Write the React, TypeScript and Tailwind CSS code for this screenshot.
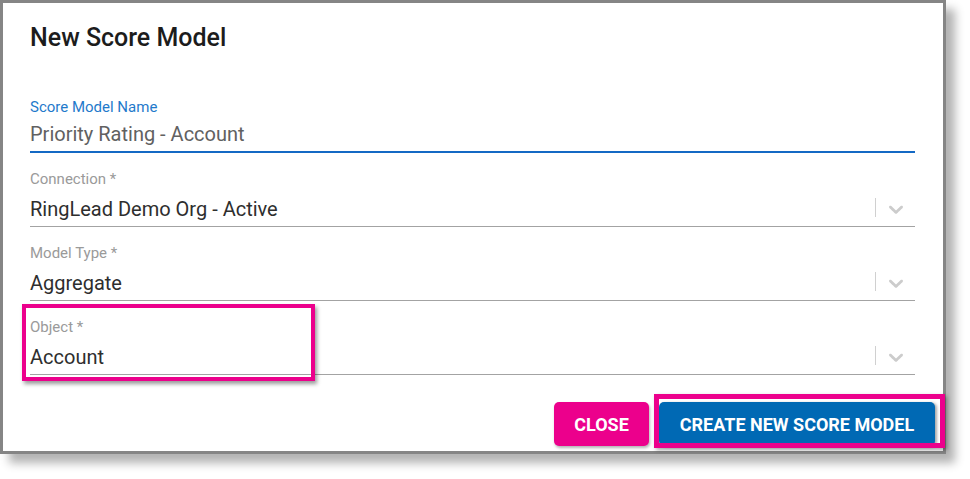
import React from 'react';

interface Field {
  label: string;
  value: string;
  select?: boolean;
}

const fields: Field[] = [
  { label: 'Connection *', value: 'RingLead Demo Org - Active', select: true },
  { label: 'Model Type *', value: 'Aggregate', select: true },
  { label: 'Object *', value: 'Account', select: true },
];

function Chevron() {
  return (
    <svg width="24" height="24" viewBox="0 0 20 20" className="ml-[8px] mr-[7px] fill-[#cccccc]">
      <path d="M4.516 7.548c0.436-0.446 1.043-0.481 1.576 0l3.908 3.747 3.908-3.747c0.533-0.481 1.141-0.446 1.574 0 0.436 0.445 0.408 1.197 0 1.615-0.406 0.418-4.695 4.502-4.695 4.502-0.217 0.223-0.502 0.335-0.787 0.335s-0.57-0.112-0.789-0.335c0 0-4.287-4.084-4.695-4.502s-0.436-1.17 0-1.615z" />
    </svg>
  );
}

function SelectField({ label, value }: Field) {
  return (
    <div className="pt-[17px] pb-[5px] border-b border-[#a3a3a3]">
      <div className="h-[18px] text-[15px] leading-[18px] text-[#9a9a9a]">{label}</div>
      <div className="mt-[9px] flex items-start h-[24px]">
        <div className="flex-1 text-[20px] leading-[24px] text-[#2e2e2e]">{value}</div>
        <div className="mt-[1px] w-px h-[19px] bg-[#d0d0d0]" />
        <Chevron />
      </div>
    </div>
  );
}

export default function App() {
  return (
    <div className="relative w-[970px] h-[479px] bg-white font-['Roboto',sans-serif]">
      {/* Dialog */}
      <div className="w-[946px] h-[454px] border-[3px] border-[#858585] bg-white pl-[27px] pt-[21px] shadow-[9px_9px_9px_rgba(0,0,0,0.3)]">
        <h1 className="h-[28px] text-[25px] leading-[28px] font-medium text-[#1c1c1c]">New Score Model</h1>

        <div className="mt-[46px] pr-[28px]">
          {/* Focused text field */}
          <div className="pb-[5px] border-b-2 border-[#1469c4]">
            <div className="h-[18px] text-[15px] leading-[18px] text-[#1f7acb]">Score Model Name</div>
            <div className="mt-[6px] h-[24px] text-[20px] leading-[24px] text-[#616161]">
              Priority Rating - Account
            </div>
          </div>

          {fields.map((f) => (
            <SelectField key={f.label} {...f} />
          ))}
        </div>

        {/* Actions */}
        <div className="mt-[27px] pr-[8px] flex justify-end gap-[10px]">
          <button className="w-[95px] h-[44px] rounded-[5px] bg-[#ec008c] text-white text-[18px] font-bold shadow-[1px_2px_3px_rgba(0,0,0,0.3)]">
            CLOSE
          </button>
          <button className="w-[276px] h-[44px] rounded-[5px] bg-[#0069b4] text-white text-[18px] font-bold shadow-[2px_1px_3px_rgba(0,0,0,0.35)]">
            CREATE NEW SCORE MODEL
          </button>
        </div>
      </div>

      {/* Highlight annotations */}
      <div className="absolute left-[22px] top-[304px] w-[293px] h-[77px] border-[4px] border-[#ec008c] shadow-[2px_3px_4px_rgba(0,0,0,0.4)]" />
      <div className="absolute left-[654px] top-[394px] w-[291px] h-[54px] border-[5px] border-[#ec008c] shadow-[2px_2px_4px_rgba(0,0,0,0.35)]" />
    </div>
  );
}
